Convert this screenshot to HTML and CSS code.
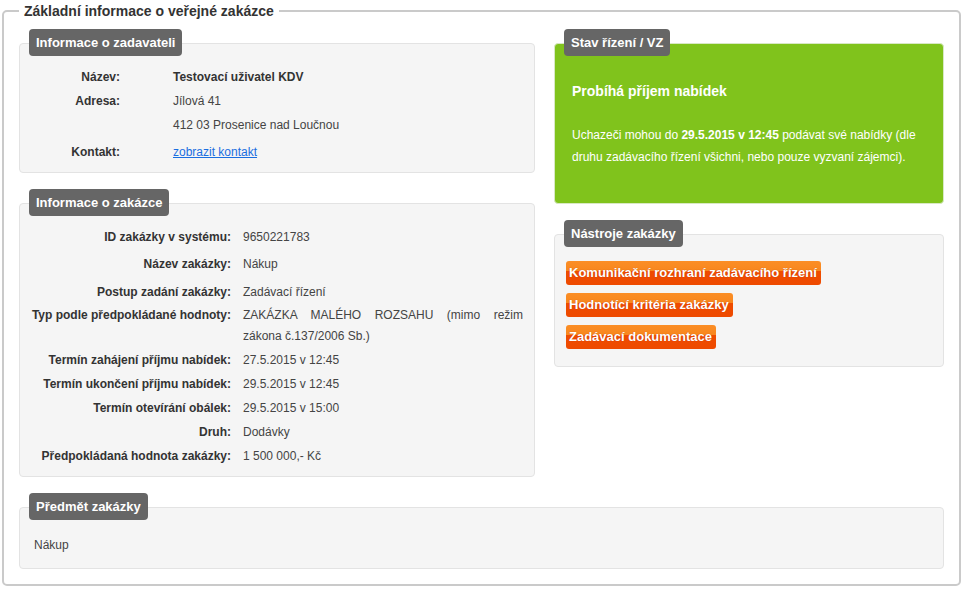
FILE: index.html
```html
<!DOCTYPE html>
<html lang="cs">
<head>
<meta charset="utf-8">
<title>Základní informace o veřejné zakázce</title>
<link rel="stylesheet" href="styles.css">
</head>
<body>
<fieldset class="main">
  <legend>Základní informace o veřejné zakázce</legend>
  <div class="cols">
    <div class="col">
      <section class="panel">
        <div class="tab">Informace o zadavateli</div>
        <div class="box box-kv">
          <div class="row r1">
            <div class="k">Název:</div>
            <div class="v strong">Testovací uživatel KDV</div>
          </div>
          <div class="row r1">
            <div class="k">Adresa:</div>
            <div class="v">Jílová 41<br>412 03 Prosenice nad Loučnou</div>
          </div>
          <div class="row r1 mt3">
            <div class="k">Kontakt:</div>
            <div class="v"><a href="#">zobrazit kontakt</a></div>
          </div>
        </div>
      </section>
      <section class="panel">
        <div class="tab">Informace o zakázce</div>
        <div class="box box-kv">
          <div class="row r2 mb3">
            <div class="k">ID zakázky v systému:</div>
            <div class="v">9650221783</div>
          </div>
          <div class="row r2 mb4">
            <div class="k">Název zakázky:</div>
            <div class="v">Nákup</div>
          </div>
          <div class="row r2">
            <div class="k">Postup zadání zakázky:</div>
            <div class="v">Zadávací řízení</div>
          </div>
          <div class="row r2 wrap">
            <div class="k">Typ podle předpokládané hodnoty:</div>
            <div class="v just">ZAKÁZKA MALÉHO ROZSAHU (mimo režim zákona č.137/2006 Sb.)</div>
          </div>
          <div class="row r2">
            <div class="k">Termín zahájení příjmu nabídek:</div>
            <div class="v">27.5.2015 v 12:45</div>
          </div>
          <div class="row r2">
            <div class="k">Termín ukončení příjmu nabídek:</div>
            <div class="v">29.5.2015 v 12:45</div>
          </div>
          <div class="row r2">
            <div class="k">Termín otevírání obálek:</div>
            <div class="v">29.5.2015 v 15:00</div>
          </div>
          <div class="row r2">
            <div class="k">Druh:</div>
            <div class="v">Dodávky</div>
          </div>
          <div class="row r2">
            <div class="k">Předpokládaná hodnota zakázky:</div>
            <div class="v">1 500 000,- Kč</div>
          </div>
        </div>
      </section>
    </div>
    <div class="col">
      <section class="panel">
        <div class="tab">Stav řízení / VZ</div>
        <div class="box box-green">
          <div class="state">Probíhá příjem nabídek</div>
          <p class="state-text">Uchazeči mohou do <b>29.5.2015 v 12:45</b> podávat své nabídky (dle druhu zadávacího řízení všichni, nebo pouze vyzvaní zájemci).</p>
        </div>
      </section>
      <section class="panel">
        <div class="tab">Nástroje zakázky</div>
        <div class="box box-tools">
          <a class="btn" href="#">Komunikační rozhraní zadávacího řízení</a>
          <a class="btn" href="#">Hodnotící kritéria zakázky</a>
          <a class="btn" href="#">Zadávací dokumentace</a>
        </div>
      </section>
    </div>
  </div>
  <section class="panel">
    <div class="tab">Předmět zakázky</div>
    <div class="box box-subject">Nákup</div>
  </section>
</fieldset>
</body>
</html>
```
FILE: styles.css
```css
html, body {
  margin: 0;
  padding: 0;
  background: #fff;
}
body {
  font-family: "Liberation Sans", Arial, sans-serif;
  font-size: 12px;
  color: #444;
}
.main {
  margin: 3px 3px 0 2px;
  padding: 10px 15px 15px;
  border: 2px solid #cacaca;
  border-radius: 5px;
  min-width: 0;
}
.main legend {
  font-size: 14px;
  line-height: 16px;
  font-weight: bold;
  color: #333;
  padding: 0 5px;
}
.cols {
  display: grid;
  grid-template-columns: 516px 1fr;
  column-gap: 19px;
}
.panel + .panel {
  margin-top: 16px;
}
.cols + .panel {
  margin-top: 16px;
}
.tab {
  position: relative;
  z-index: 1;
  display: inline-block;
  margin-left: 10px;
  padding: 0 7px 0 7px;
  height: 27px;
  line-height: 27px;
  background: #666;
  color: #fff;
  font-size: 13px;
  font-weight: bold;
  border-radius: 4px;
}
.box {
  margin-top: -13px;
  background: #f5f5f5;
  border: 1px solid #e3e3e3;
  border-radius: 4px;
}
.box-kv {
  padding: 21px 11px 8px 10px;
}
.row {
  display: grid;
  line-height: 24px;
}
.r1 {
  grid-template-columns: 90px 1fr;
  column-gap: 53px;
}
.r2 {
  grid-template-columns: 201px 1fr;
  column-gap: 12px;
}
.mt3 { margin-top: 3px; }
.mb3 { margin-bottom: 3px; }
.mb4 { margin-bottom: 4px; }
.wrap {
  line-height: 21px;
  padding: 1px 0;
}
.k {
  text-align: right;
  font-weight: bold;
  color: #333;
}
.v {
  color: #444;
}
.v.strong {
  font-weight: bold;
  color: #333;
}
.just {
  text-align: justify;
}
.v a {
  color: #1a6ee0;
  text-decoration: underline;
}
.box-green {
  background: #80c31c;
  border-color: #d8e8c4;
  color: #fff;
  padding: 37px 18px 35px 17px;
}
.state {
  font-size: 14px;
  line-height: 20px;
  font-weight: bold;
}
.state-text {
  margin: 23px 0 0;
  line-height: 22px;
}
.box-tools {
  display: flex;
  flex-direction: column;
  align-items: flex-start;
  gap: 8px;
  padding: 26px 11px 17px;
}
.btn {
  display: block;
  height: 24px;
  line-height: 24px;
  padding: 0 4px 0 3px;
  border-radius: 3px;
  background: linear-gradient(#fb8e26 0%, #f8871e 40%, #ef4c00 42%, #ee4a00 100%);
  color: #fff;
  font-size: 13px;
  font-weight: bold;
  text-decoration: none;
  text-shadow: 0 0 1px rgba(150, 30, 0, 0.5);
}
.box-subject {
  padding: 25px 14px 11px;
  line-height: 24px;
  color: #444;
}
```
